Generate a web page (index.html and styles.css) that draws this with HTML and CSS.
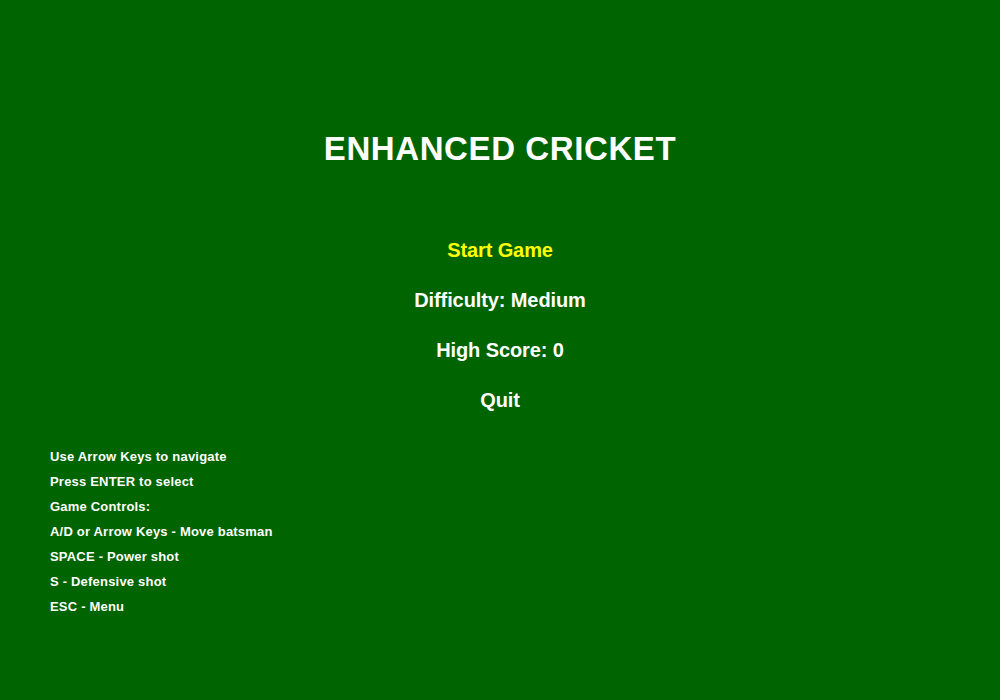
FILE: index.html
```html
<!DOCTYPE html>
<html>
<head>
<meta charset="utf-8">
<link rel="stylesheet" href="styles.css">
</head>
<body>
<main class="screen">
  <h1 class="title">ENHANCED CRICKET</h1>
  <ul class="menu">
    <li class="item selected">Start Game</li>
    <li class="item">Difficulty: Medium</li>
    <li class="item">High Score: 0</li>
    <li class="item">Quit</li>
  </ul>
  <ul class="help">
    <li>Use Arrow Keys to navigate</li>
    <li>Press ENTER to select</li>
    <li>Game Controls:</li>
    <li>A/D or Arrow Keys - Move batsman</li>
    <li>SPACE - Power shot</li>
    <li>S - Defensive shot</li>
    <li>ESC - Menu</li>
  </ul>
</main>
</body>
</html>
```
FILE: styles.css
```css
html, body {
  margin: 0;
  padding: 0;
  background: #006400;
}
.screen {
  width: 1000px;
  height: 700px;
  display: flex;
  flex-direction: column;
  font-family: "Liberation Sans", Arial, sans-serif;
  font-weight: bold;
  color: #ffffff;
  padding-top: 129px;
  box-sizing: border-box;
}
.title {
  margin: 0;
  font-size: 33px;
  letter-spacing: 0.6px;
  line-height: 40px;
  height: 40px;
  text-align: center;
  font-weight: bold;
}
.menu {
  list-style: none;
  margin: 55.5px 0 0 0;
  padding: 0;
}
.item {
  font-size: 20px;
  letter-spacing: -0.1px;
  line-height: 50px;
  height: 50px;
  text-align: center;
}
.item.selected {
  color: #ffff00;
}
.help {
  list-style: none;
  margin: 19.5px 0 0 0;
  padding: 0 0 0 50px;
}
.help li {
  font-size: 13px;
  letter-spacing: 0.2px;
  line-height: 25px;
  height: 25px;
}
```
